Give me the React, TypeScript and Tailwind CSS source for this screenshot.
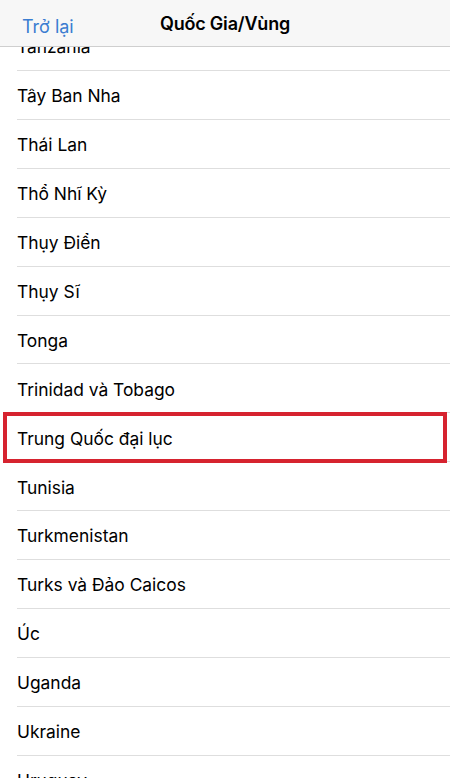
const countries = [
  "Tanzania",
  "Tây Ban Nha",
  "Thái Lan",
  "Thổ Nhĩ Kỳ",
  "Thụy Điển",
  "Thụy Sĩ",
  "Tonga",
  "Trinidad và Tobago",
  "Trung Quốc đại lục",
  "Tunisia",
  "Turkmenistan",
  "Turks và Đảo Caicos",
  "Úc",
  "Uganda",
  "Ukraine",
  "Uruguay",
];

const selected = "Trung Quốc đại lục";

export default function App() {
  return (
    <div
      className="relative h-[778px] w-[450px] overflow-hidden bg-white text-black"
      style={{ fontFamily: "Inter, 'Noto Sans', sans-serif" }}
    >
      {/* Nav bar */}
      <div className="absolute inset-x-0 top-0 z-20 flex h-[47px] items-center justify-center border-b border-[#cfcfcf] bg-[#f7f7f7] pt-[1px]">
        <button className="absolute left-[22px] top-[13px] text-[18px] text-[#3b7dd1]">Trở lại</button>
        <h1 className="text-[18px] font-semibold tracking-[-0.2px]">Quốc Gia/Vùng</h1>
      </div>

      {/* List */}
      <ul className="mt-[22px]">
        {countries.map((name) => (
          <li key={name} className="relative h-[48.93px] pl-[17px]">
            <div className="flex h-full items-center border-b border-[#dedede] pt-[2px] text-[17.4px] leading-none">
              {name}
            </div>
            {name === selected && (
              <div className="pointer-events-none absolute -top-[1.5px] -bottom-[1px] left-[3px] right-[3px] z-10 border-4 border-[#d6232f]" />
            )}
          </li>
        ))}
      </ul>
    </div>
  );
}
